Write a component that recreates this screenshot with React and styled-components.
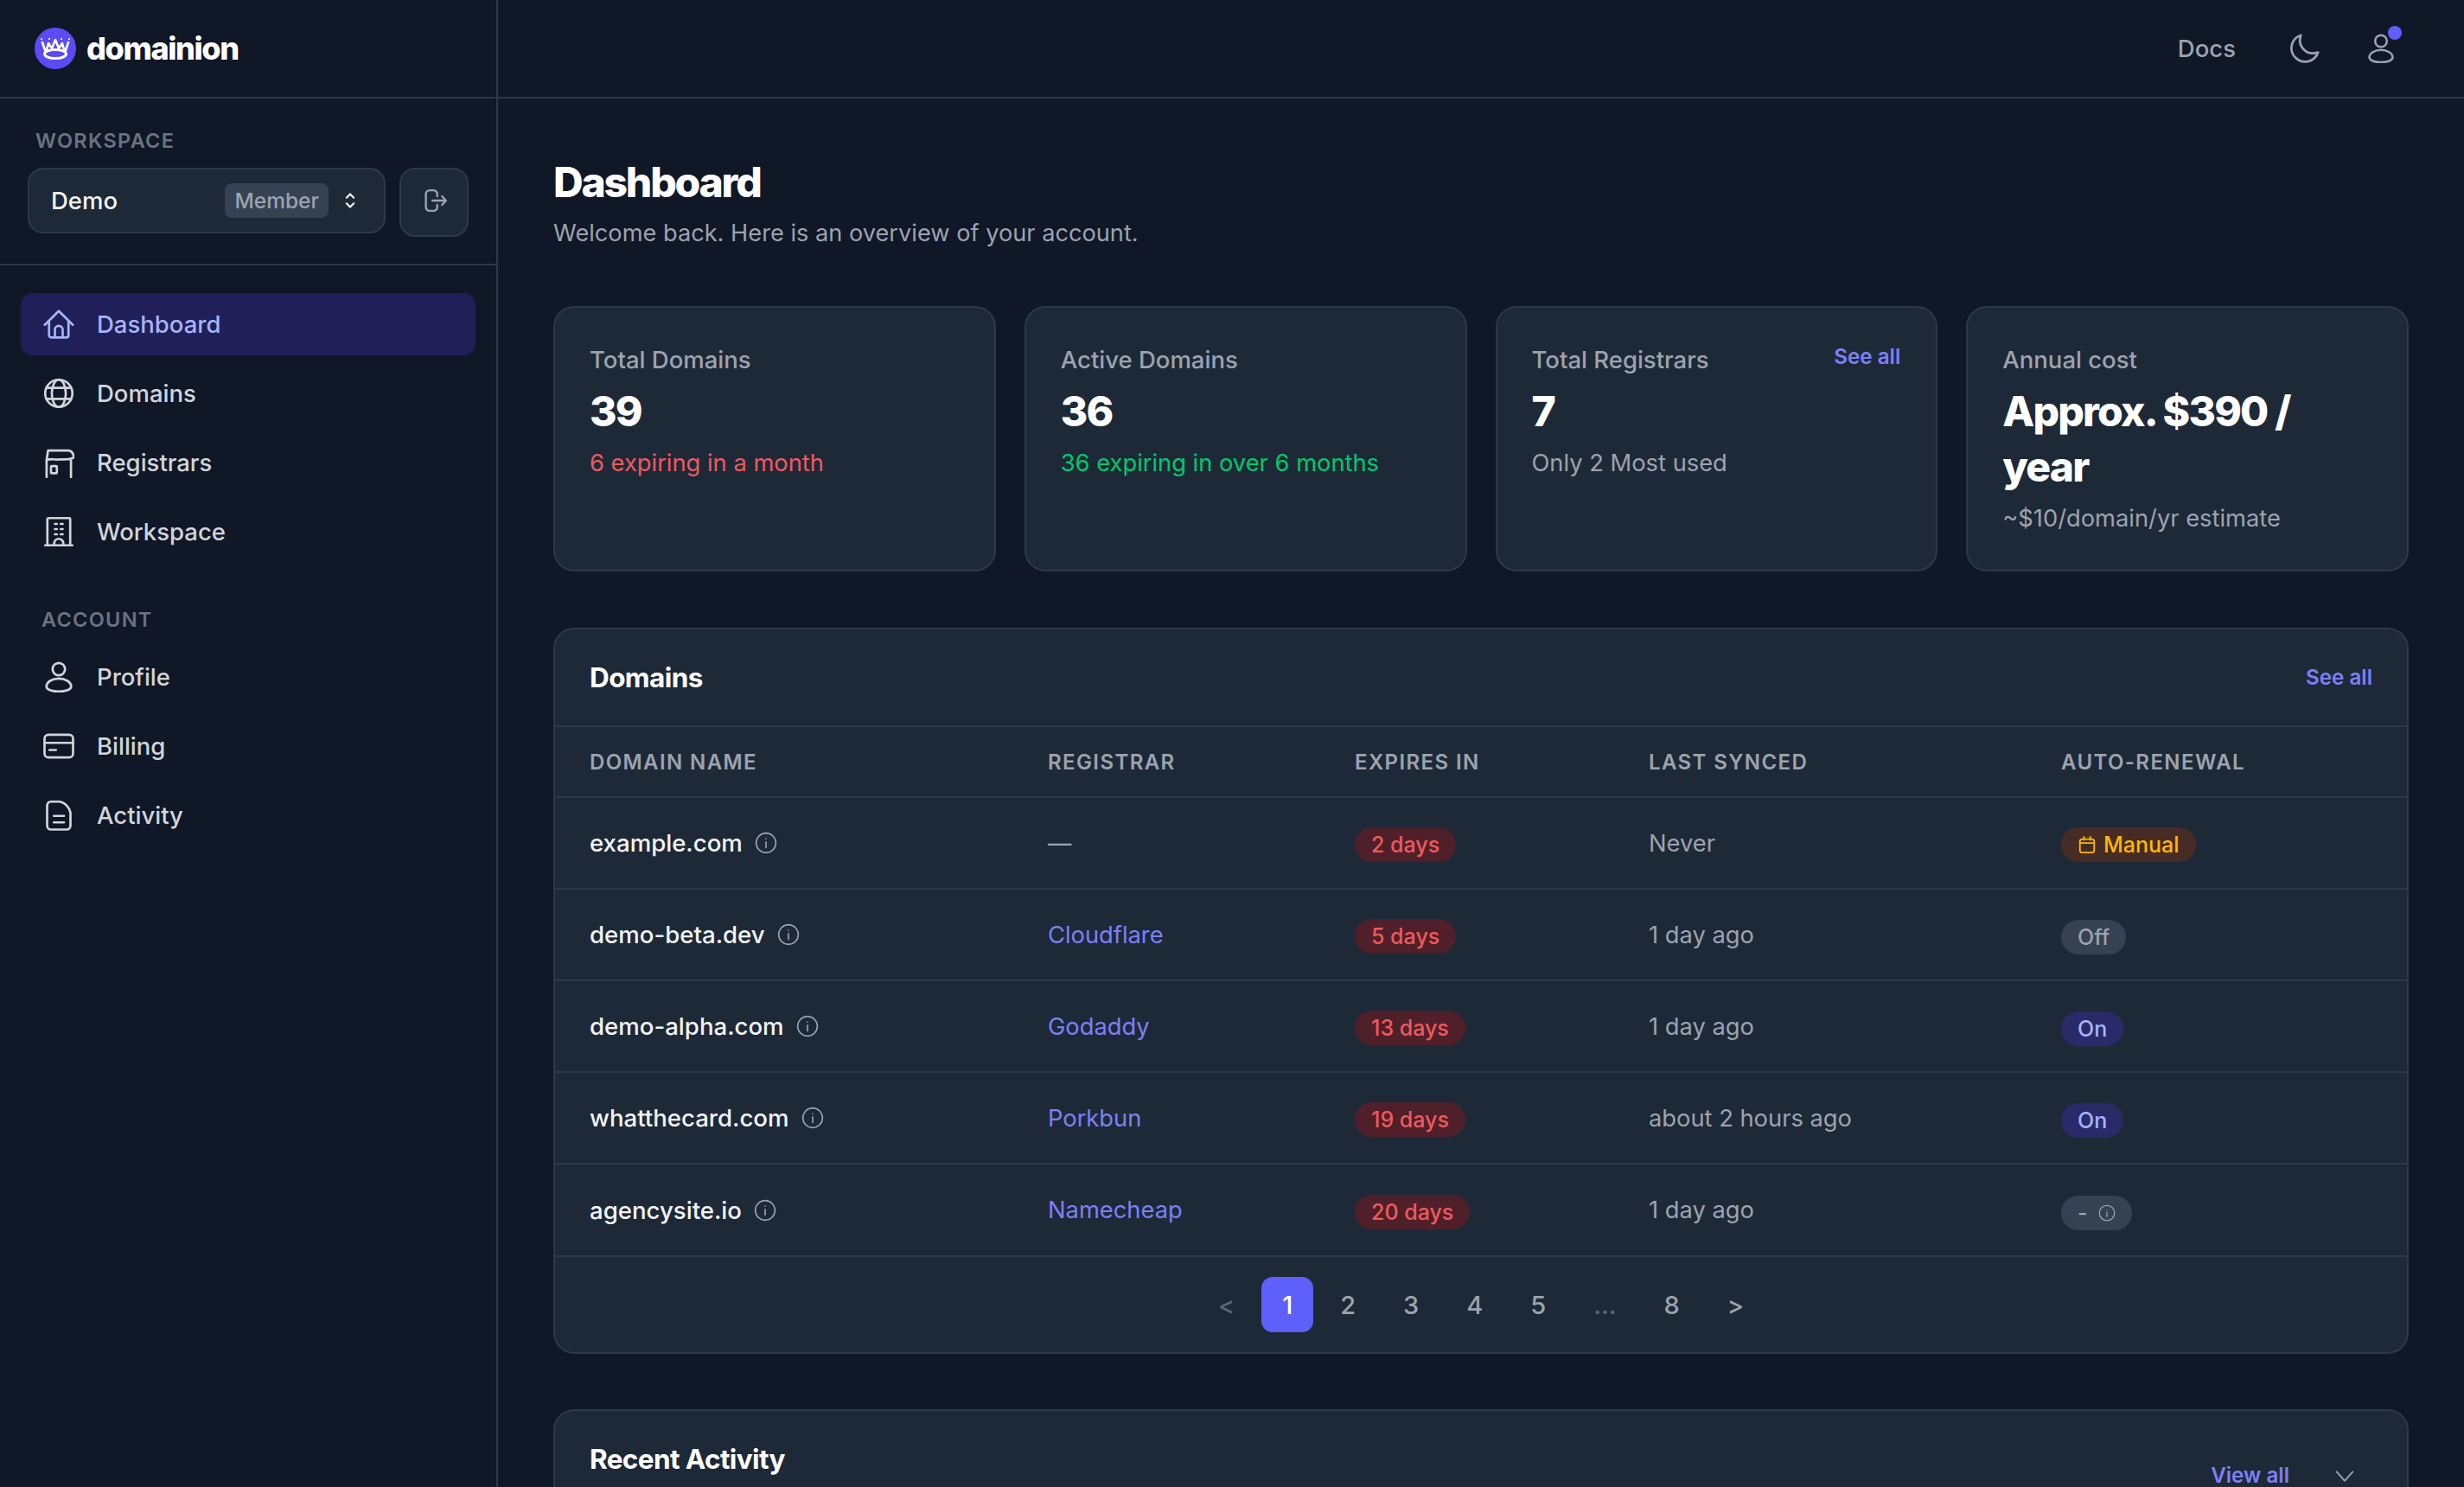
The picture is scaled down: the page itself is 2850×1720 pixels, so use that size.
import styled, { createGlobalStyle } from "styled-components";

const GlobalStyle = createGlobalStyle`
  html, body {
    margin: 0;
    height: 100%;
    overflow: hidden;
    background: #101726;
  }
  * { box-sizing: border-box; }
  body {
    font-family: Inter, "Noto Sans", sans-serif;
    color: #e5e7eb;
  }
`;

const line = "#2d3849";
const card = "#1e2938";
const accent = "#7c80f7";

const Shell = styled.div`
  display: grid;
  grid-template-columns: 576px 1fr;
  height: 1720px;
  overflow: hidden;
`;

const Sidebar = styled.aside`
  border-right: 2px solid ${line};
  display: flex;
  flex-direction: column;
`;

const Brand = styled.div`
  height: 114px;
  border-bottom: 2px solid ${line};
  padding-left: 40px;
  display: flex;
  align-items: center;
  gap: 12px;
`;

const BrandName = styled.span`
  font-size: 36px;
  font-weight: 800;
  letter-spacing: -1.4px;
  color: #fff;
`;

const WorkspaceBlock = styled.div`
  height: 193px;
  padding: 35px 32px 0;
  border-bottom: 2px solid ${line};
`;

const WorkspaceLabel = styled.div`
  font-size: 23.5px;
  line-height: 28px;
  font-weight: 600;
  letter-spacing: 1.3px;
  color: #6b7280;
  padding-left: 9px;
  margin-bottom: 17px;
`;

const WorkspaceRow = styled.div`
  display: flex;
  align-items: flex-start;
  gap: 16px;
`;

const WorkspaceSelect = styled.div`
  width: 414px;
  height: 76px;
  border-radius: 18px;
  background: ${card};
  border: 2px solid ${line};
  padding: 0 29px 0 25px;
  display: flex;
  align-items: center;
  font-size: 27.5px;
  font-weight: 500;
  color: #f3f4f6;
`;

const RoleTag = styled.span`
  margin-left: auto;
  margin-right: 15px;
  padding: 0 11px;
  height: 40px;
  line-height: 40px;
  border-radius: 8px;
  background: #364152;
  color: #9ca3af;
  font-size: 24.5px;
  font-weight: 500;
`;

const LeaveButton = styled.button`
  width: 80px;
  height: 80px;
  border-radius: 18px;
  background: ${card};
  border: 2px solid ${line};
  color: #9ca3af;
  padding: 0 0 4px;
  display: flex;
  align-items: center;
  justify-content: center;
`;

const Nav = styled.nav`
  padding: 32px 24px 0;
  display: flex;
  flex-direction: column;
  gap: 8px;
`;

const NavItem = styled.a`
  height: 72px;
  border-radius: 14px;
  padding-left: 26px;
  display: flex;
  align-items: center;
  gap: 26px;
  font-size: 27.5px;
  font-weight: 500;
  color: ${(p) => (p.$active ? "#a5b4fc" : "#d1d5db")};
  background: ${(p) => (p.$active ? "#201f57" : "transparent")};
`;

const NavHeading = styled.div`
  font-size: 23.5px;
  line-height: 28px;
  font-weight: 600;
  letter-spacing: 1.3px;
  color: #6b7280;
  padding-left: 24px;
  margin: 44px 0 8px;
`;

const Main = styled.div`
  min-width: 0;
  display: flex;
  flex-direction: column;
`;

const Topbar = styled.header`
  height: 114px;
  flex: none;
  border-bottom: 2px solid ${line};
  padding-right: 79px;
  display: flex;
  align-items: center;
  justify-content: flex-end;
  color: #9ca3af;
`;

const DocsLink = styled.a`
  font-size: 27.5px;
  font-weight: 500;
  margin-right: 61px;
`;

const MoonButton = styled.span`
  display: flex;
  margin-right: 54px;
`;

const UserButton = styled.span`
  position: relative;
  display: flex;
`;

const UserDot = styled.i`
  position: absolute;
  top: -9px;
  right: -7px;
  width: 16px;
  height: 16px;
  border-radius: 50%;
  background: #5f5ffb;
`;

const Content = styled.main`
  padding: 67px 64px 0 64px;
`;

const PageTitle = styled.h1`
  margin: 0;
  font-size: 48px;
  line-height: 60px;
  font-weight: 800;
  letter-spacing: -2.2px;
  color: #fff;
`;

const PageSub = styled.p`
  margin: 7px 0 0;
  font-size: 27.2px;
  line-height: 44px;
  color: #9ca3af;
`;

const Stats = styled.section`
  display: grid;
  grid-template-columns: repeat(4, 1fr);
  gap: 33px;
  margin-top: 62px;
`;

const StatCard = styled.div`
  position: relative;
  height: 307px;
  border-radius: 24px;
  background: ${card};
  border: 2px solid ${line};
  padding: 39px 40px 0;
`;

const StatLabel = styled.div`
  font-size: 27.5px;
  line-height: 42px;
  font-weight: 500;
  color: #9ca3af;
`;

const StatValue = styled.div`
  margin-top: 7px;
  font-size: 48px;
  line-height: 64px;
  font-weight: 800;
  letter-spacing: -1.8px;
  color: #fff;
`;

const StatNote = styled.div`
  margin-top: 6px;
  font-size: 27.3px;
  line-height: 44px;
  color: ${(p) => p.$color || "#9ca3af"};
`;

const SeeAll = styled.a`
  font-size: 24.2px;
  font-weight: 600;
  color: ${accent};
`;

const CardLink = styled(SeeAll)`
  position: absolute;
  top: 42px;
  right: 41px;
`;

const Panel = styled.section`
  border-radius: 24px;
  background: ${card};
  border: 2px solid ${line};
  margin-top: ${(p) => p.$top}px;
  overflow: hidden;
`;

const PanelHead = styled.div`
  height: 111px;
  padding: 0 40px;
  display: flex;
  align-items: center;
  justify-content: space-between;
`;

const PanelTitle = styled.h2`
  margin: 0;
  font-size: 31.5px;
  font-weight: 700;
  letter-spacing: -0.6px;
  color: #fff;
`;

const Table = styled.table`
  width: 100%;
  table-layout: fixed;
  border-collapse: collapse;
`;

const HeadCell = styled.th`
  height: 82px;
  padding: 0 0 0 40px;
  border-top: 2px solid ${line};
  text-align: left;
  font-size: 24px;
  font-weight: 600;
  letter-spacing: 1.4px;
  color: #9ca3af;
  white-space: nowrap;
`;

const Cell = styled.td`
  height: 106px;
  padding: 0 0 0 40px;
  border-top: 2px solid ${line};
  font-size: 27.3px;
  color: ${(p) => p.$color || "#9ca3af"};
  white-space: nowrap;
`;

const DomainName = styled.span`
  display: inline-flex;
  align-items: center;
  gap: 14px;
  font-size: 27.6px;
  font-weight: 500;
  color: #f3f4f6;
`;

const InfoMark = styled.span`
  display: inline-flex;
  color: ${(p) => p.$color || "#9ca3af"};
`;

const RegistrarLink = styled.a`
  color: ${accent};
`;

const Badge = styled.span`
  display: inline-flex;
  align-items: center;
  gap: ${(p) => p.$gap || 8}px;
  height: 40px;
  padding: 0 ${(p) => p.$pad || 19}px;
  border-radius: 20px;
  font-size: 25px;
  font-weight: 500;
  position: relative;
  top: ${(p) => p.$shift || 2}px;
  color: ${(p) => p.$color};
  background: ${(p) => p.$bg};
`;

const Pager = styled.div`
  height: 112px;
  border-top: 2px solid ${line};
  display: flex;
  align-items: center;
  justify-content: center;
  gap: 7px;
`;

const PageItem = styled.span`
  height: 64px;
  padding: 0 24px;
  border-radius: 13px;
  display: flex;
  align-items: center;
  font-size: 29px;
  font-weight: 500;
  color: ${(p) => (p.$active ? "#fff" : p.$muted ? "#5b6575" : "#9ca3af")};
  background: ${(p) => (p.$active ? "#5f5ffb" : "transparent")};
`;

const ActivityHead = styled.div`
  position: relative;
  height: 300px;
  padding: 36px 40px 0;
`;

const ActivityTools = styled.div`
  position: absolute;
  top: 60px;
  right: 58px;
  display: flex;
  align-items: center;
  gap: 50px;
  color: #9ca3af;
`;

function Icon({ size = 36, width = 1.8, children }) {
  return (
    <svg
      width={size}
      height={size}
      viewBox="0 0 24 24"
      fill="none"
      stroke="currentColor"
      strokeWidth={width}
      strokeLinecap="round"
      strokeLinejoin="round"
    >
      {children}
    </svg>
  );
}

const HomeIcon = () => (
  <Icon>
    <path d="M1.2 12.5 12 1.8l10.800 10.700M4.500 9.500v11a1.800 1.800 0 0 0 1.800 1.800h11.400a1.800 1.800 0 0 0 1.800-1.800v-11M9 22.300v-6a3 3 0 0 1 6 0v6" />
  </Icon>
);
const GlobeIcon = () => (
  <Icon>
    <circle cx="12" cy="12" r="10.500" />
    <ellipse cx="12" cy="12" rx="5.400" ry="10.500" />
    <path d="M2.600 7.700h18.800M2.600 16.300h18.800" />
  </Icon>
);
const StoreIcon = () => (
  <Icon>
    <path d="M2.600 10 3.700 2.800H19.500Q23 3.200 23.700 8M2.600 10c2.500-.6 4-.6 5.200-.5 1.800.3 3.600.3 5.200 0 1.800.2 3.400.2 5 0 1.800 0 3.500-.5 5.500-1.200M2.600 10v13.200M21.400 10v13.200" />
    <rect x="6" y="14.700" width="4.500" height="5.600" rx=".6" />
  </Icon>
);
const OfficeIcon = () => (
  <Icon>
    <path d="M3.200 22.500V2.500a1 1 0 0 1 1-1h15.600a1 1 0 0 1 1 1v20M1.500 22.500h21M8.500 22.500v-1.500a3.500 3.500 0 0 1 7 0v1.500M9 6h1.500M13.500 6H15M9 10h1.500M13.500 10H15M9 14h1.500M13.500 14H15" />
  </Icon>
);
const UserIcon = ({ size = 36 }) => (
  <Icon size={size}>
    <circle cx="12" cy="6" r="4.800" />
    <path d="M12 13.300c-5 0-9.500 2.500-9.500 6 0 2.500 4 4 9.500 4s9.500-1.500 9.500-4c0-3.500-4.500-6-9.500-6Z" />
  </Icon>
);
const CardIcon = () => (
  <Icon>
    <rect x="1" y="3.200" width="22" height="17.600" rx="3" />
    <path d="M1 9.500h22M4.800 15h5" />
  </Icon>
);
const DocIcon = () => (
  <Icon>
    <path d="M3 4.500a3 3 0 0 1 3-3h6.500c4 .5 7.500 4 8.500 8.500V20a3 3 0 0 1-3 3H6a3 3 0 0 1-3-3Z" />
    <path d="M8.200 12.500h7.800M8.200 17.500h7.800" />
  </Icon>
);
const MoonIcon = () => (
  <Icon width={1.8}>
    <path d="M9.500 1.800A10.500 10.500 0 1 0 22.800 15 C14.500 18 6.500 11 9.500 1.800Z" />
  </Icon>
);
const LeaveIcon = () => (
  <Icon size={30} width={1.9}>
    <path d="M15 8V6a3.500 3.500 0 0 0-3.500-3.500H8A3.500 3.500 0 0 0 4.500 6v12A3.500 3.500 0 0 0 8 21.500h3.500A3.500 3.500 0 0 0 15 18v-2M10.500 12H23M19.500 8l3.500 4-3.500 4" />
  </Icon>
);
const UpDownIcon = () => (
  <Icon size={20} width={2.6}>
    <path d="m7 8 5-5 5 5M7 16l5 5 5-5" />
  </Icon>
);
const InfoIcon = ({ size = 26 }) => (
  <Icon size={size} width={1.5}>
    <circle cx="12" cy="12" r="10.500" />
    <path d="M12 11v6M12 7.500v.01" />
  </Icon>
);
const CalendarIcon = () => (
  <Icon size={22} width={2}>
    <rect x="3" y="5" width="18" height="17" rx="3" />
    <path d="M3 10h18M8 2v4M16 2v4" />
  </Icon>
);
const ChevronIcon = () => (
  <Icon size={28} width={1.6}>
    <path d="m4 8 8 9 8-9" />
  </Icon>
);

const CrownLogo = () => (
  <svg width="48" height="48" viewBox="0 0 48 48" fill="none" stroke="#fff" strokeLinejoin="round" strokeLinecap="round">
    <circle cx="24" cy="24" r="24" fill="#5b4bf5" stroke="none" />
    <path d="M9 17l4 12 3-11 4 6 4-10 4 10 4-6 3 11 4-12" strokeWidth="2.600" />
    <path d="M8 13v.1M17 13v.1M31 13v.1M40 13v.1" strokeWidth="2.200" />
    <ellipse cx="24" cy="30.500" rx="12.500" ry="5" fill="#5b4bf5" strokeWidth="3" />
  </svg>
);

const stats = [
  { label: "Total Domains", value: "39", note: "6 expiring in a month", color: "#ef5a5f" },
  { label: "Active Domains", value: "36", note: "36 expiring in over 6 months", color: "#00c96b" },
  { label: "Total Registrars", value: "7", note: "Only 2 Most used", link: "See all" },
  { label: "Annual cost", value: "Approx. $390 / year", note: "~$10/domain/yr estimate" },
];

const columns = [
  ["DOMAIN NAME", 530],
  ["REGISTRAR", 355],
  ["EXPIRES IN", 340],
  ["LAST SYNCED", 477],
  ["AUTO-RENEWAL", 441],
];

const renewal = {
  manual: { label: "Manual", color: "#fdb900", bg: "#472c25" },
  off: { label: "Off", color: "#9ca3af", bg: "#364152" },
  on: { label: "On", color: "#a5b4fc", bg: "#2b2a68" },
  unknown: { label: "-", color: "#9ca3af", bg: "#364152" },
};

const domains = [
  { name: "example.com", registrar: null, days: "2 days", synced: "Never", renewal: "manual" },
  { name: "demo-beta.dev", registrar: "Cloudflare", days: "5 days", synced: "1 day ago", renewal: "off" },
  { name: "demo-alpha.com", registrar: "Godaddy", days: "13 days", synced: "1 day ago", renewal: "on" },
  { name: "whatthecard.com", registrar: "Porkbun", days: "19 days", synced: "about 2 hours ago", renewal: "on" },
  { name: "agencysite.io", registrar: "Namecheap", days: "20 days", synced: "1 day ago", renewal: "unknown" },
];

const pages = ["<", "1", "2", "3", "4", "5", "...", "8", ">"];

function RenewalBadge({ kind }) {
  const r = renewal[kind];
  return (
    <Badge $color={r.color} $bg={r.bg} $shift={kind === "manual" ? 0 : 3} $gap={kind === "unknown" ? 12 : 8}>
      {kind === "manual" && <CalendarIcon />}
      {r.label}
      {kind === "unknown" && <InfoIcon size={20} />}
    </Badge>
  );
}

export default function App() {
  return (
    <>
      <GlobalStyle />
      <Shell>
        <Sidebar>
          <Brand>
            <CrownLogo />
            <BrandName>domainion</BrandName>
          </Brand>
          <WorkspaceBlock>
            <WorkspaceLabel>WORKSPACE</WorkspaceLabel>
            <WorkspaceRow>
              <WorkspaceSelect>
                Demo
                <RoleTag>Member</RoleTag>
                <UpDownIcon />
              </WorkspaceSelect>
              <LeaveButton>
                <LeaveIcon />
              </LeaveButton>
            </WorkspaceRow>
          </WorkspaceBlock>
          <Nav>
            <NavItem $active>
              <HomeIcon />
              Dashboard
            </NavItem>
            <NavItem>
              <GlobeIcon />
              Domains
            </NavItem>
            <NavItem>
              <StoreIcon />
              Registrars
            </NavItem>
            <NavItem>
              <OfficeIcon />
              Workspace
            </NavItem>
            <NavHeading>ACCOUNT</NavHeading>
            <NavItem>
              <UserIcon />
              Profile
            </NavItem>
            <NavItem>
              <CardIcon />
              Billing
            </NavItem>
            <NavItem>
              <DocIcon />
              Activity
            </NavItem>
          </Nav>
        </Sidebar>
        <Main>
          <Topbar>
            <DocsLink>Docs</DocsLink>
            <MoonButton>
              <MoonIcon />
            </MoonButton>
            <UserButton>
              <UserIcon size={34} />
              <UserDot />
            </UserButton>
          </Topbar>
          <Content>
            <PageTitle>Dashboard</PageTitle>
            <PageSub>Welcome back. Here is an overview of your account.</PageSub>
            <Stats>
              {stats.map((s) => (
                <StatCard key={s.label}>
                  <StatLabel>{s.label}</StatLabel>
                  {s.link && <CardLink>{s.link}</CardLink>}
                  <StatValue>{s.value}</StatValue>
                  <StatNote $color={s.color}>{s.note}</StatNote>
                </StatCard>
              ))}
            </Stats>
            <Panel $top={65}>
              <PanelHead>
                <PanelTitle>Domains</PanelTitle>
                <SeeAll>See all</SeeAll>
              </PanelHead>
              <Table>
                <colgroup>
                  {columns.map(([name, w]) => (
                    <col key={name} width={w} />
                  ))}
                </colgroup>
                <thead>
                  <tr>
                    {columns.map(([name]) => (
                      <HeadCell key={name}>{name}</HeadCell>
                    ))}
                  </tr>
                </thead>
                <tbody>
                  {domains.map((d) => (
                    <tr key={d.name}>
                      <Cell>
                        <DomainName>
                          {d.name}
                          <InfoMark>
                            <InfoIcon />
                          </InfoMark>
                        </DomainName>
                      </Cell>
                      <Cell>
                        {d.registrar ? <RegistrarLink>{d.registrar}</RegistrarLink> : "—"}
                      </Cell>
                      <Cell>
                        <Badge $color="#f0595d" $bg="#4f202a">
                          {d.days}
                        </Badge>
                      </Cell>
                      <Cell>{d.synced}</Cell>
                      <Cell>
                        <RenewalBadge kind={d.renewal} />
                      </Cell>
                    </tr>
                  ))}
                </tbody>
              </Table>
              <Pager>
                {pages.map((p) => (
                  <PageItem key={p} $active={p === "1"} $muted={p === "<" || p === "..."}>
                    {p}
                  </PageItem>
                ))}
              </Pager>
            </Panel>
            <Panel $top={64}>
              <ActivityHead>
                <PanelTitle>Recent Activity</PanelTitle>
                <ActivityTools>
                  <SeeAll>View all</SeeAll>
                  <ChevronIcon />
                </ActivityTools>
              </ActivityHead>
            </Panel>
          </Content>
        </Main>
      </Shell>
    </>
  );
}
